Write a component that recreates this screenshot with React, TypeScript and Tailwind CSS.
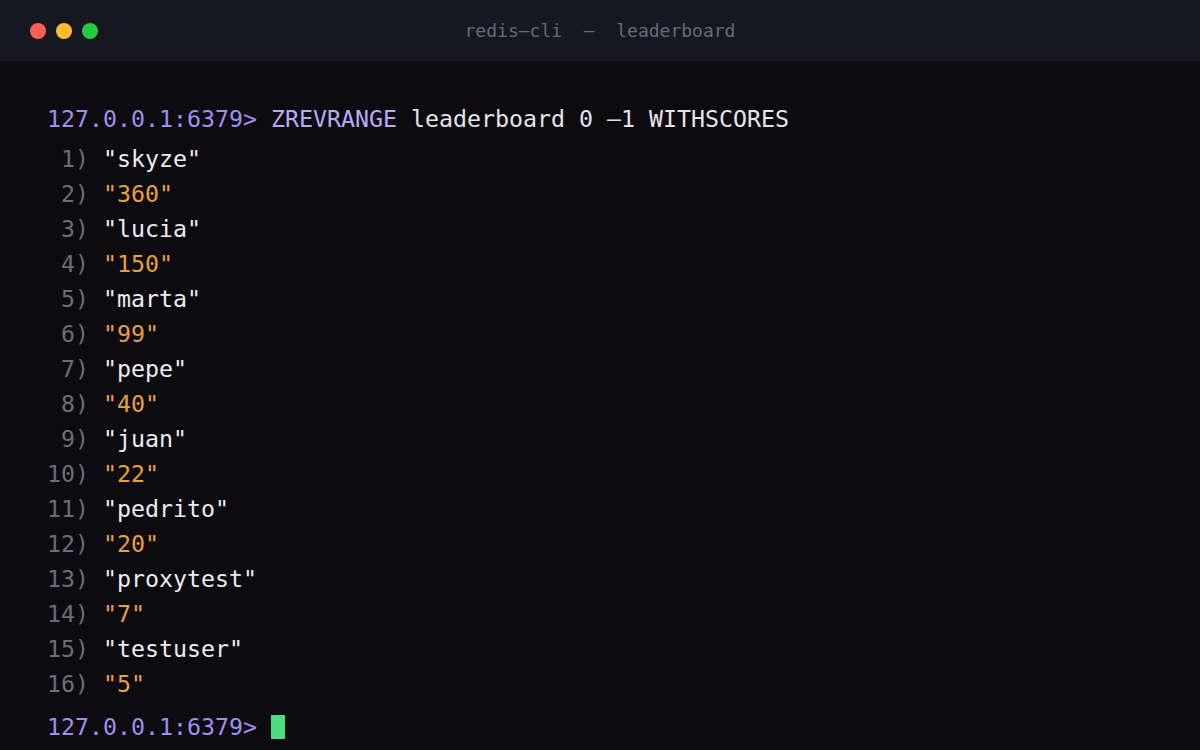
import React from "react";

const rows: { value: string; score: boolean }[] = [
  { value: "skyze", score: false },
  { value: "360", score: true },
  { value: "lucia", score: false },
  { value: "150", score: true },
  { value: "marta", score: false },
  { value: "99", score: true },
  { value: "pepe", score: false },
  { value: "40", score: true },
  { value: "juan", score: false },
  { value: "22", score: true },
  { value: "pedrito", score: false },
  { value: "20", score: true },
  { value: "proxytest", score: false },
  { value: "7", score: true },
  { value: "testuser", score: false },
  { value: "5", score: true },
];

const mono = "font-['DejaVu_Sans_Mono','Liberation_Mono',monospace]";

export default function App() {
  return (
    <div className={`w-[1200px] h-[750px] bg-[#0c0c10] flex flex-col overflow-hidden ${mono}`}>
      {/* Title bar */}
      <div className="h-[61px] shrink-0 bg-[#161720] relative flex items-center px-[30px]">
        <div className="flex gap-[10px]">
          <span className="w-4 h-4 rounded-full bg-[#ff5f57]" />
          <span className="w-4 h-4 rounded-full bg-[#febc2e]" />
          <span className="w-4 h-4 rounded-full bg-[#28c840]" />
        </div>
        <div className="absolute inset-0 flex items-center justify-center text-[18px] text-[#676a77] whitespace-pre">
          redis–cli  —  leaderboard
        </div>
      </div>

      {/* Terminal body */}
      <div className="pl-[47px] pt-[40px] text-[23.25px] leading-[35px] whitespace-pre">
        <div>
          <span className="text-[#a48cf2]">127.0.0.1:6379&gt; </span>
          <span className="text-[#b9aaf5]">ZREVRANGE</span>
          <span className="text-[#e4e4ea]"> leaderboard 0 –1 WITHSCORES</span>
        </div>
        <div className="mt-[5px]">
          {rows.map((r, i) => (
            <div key={i}>
              <span className="text-[#6b6e78]">{String(i + 1).padStart(2, " ")}) </span>
              <span className={r.score ? "text-[#eaa03a]" : "text-[#ececf1]"}>"{r.value}"</span>
            </div>
          ))}
        </div>
        <div className="mt-[8px] flex items-center">
          <span className="text-[#a48cf2]">127.0.0.1:6379&gt; </span>
          <span className="inline-block w-[14px] h-[24px] bg-[#4ade80]" />
        </div>
      </div>
    </div>
  );
}
